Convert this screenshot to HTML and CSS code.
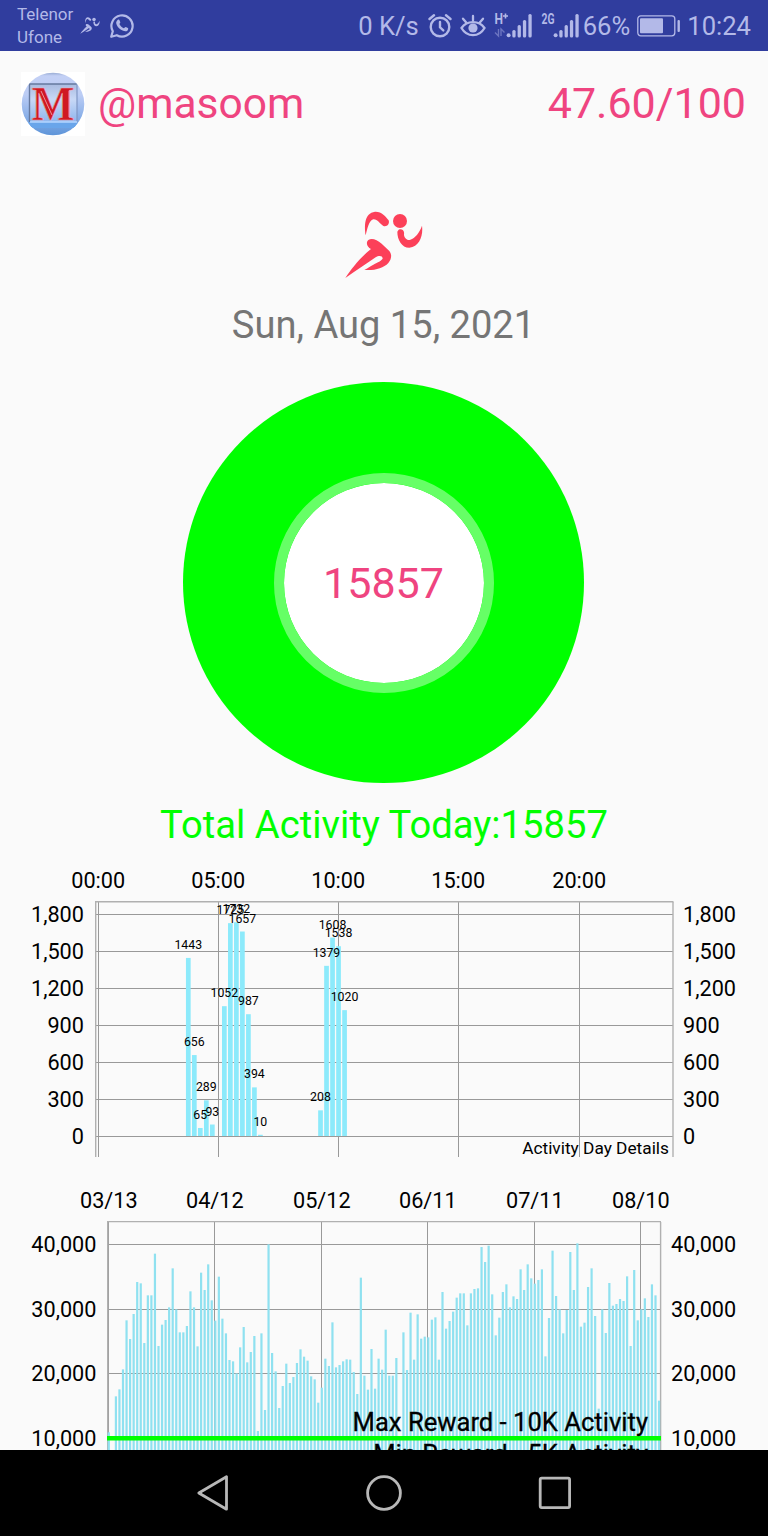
FILE: index.html
```html
<!DOCTYPE html>
<html lang="en">
<head>
    <meta charset="UTF-8">
    <meta name="viewport" content="width=device-width, initial-scale=1.0">
    <title>Activity Tracker</title>
    <link rel="stylesheet" href="styles.css">
</head>
<body>
    <div class="status-bar">
        <div class="carriers">
            <span>Telenor</span>
            <span>Ufone</span>
        </div>
        <svg class="mini-runner" width="20" height="17" viewBox="74 64 236 203"><use href="#runner"/></svg>
        <svg class="whatsapp" width="26" height="26" viewBox="0 0 26 26">
            <path d="M2.2 23.8 L3.8 18.2 A10.6 10.6 0 1 1 7.8 22.2 Z" fill="none" stroke="currentColor" stroke-width="2.2" stroke-linejoin="round"/>
            <path d="M8.6 7 C9.3 6.3 10.2 6.5 10.5 7.2 L11.3 9.2 C11.5 9.8 10.4 10.7 10.4 11.1 C11.2 13 12.8 14.4 14.8 15.2 C15.4 15.3 16.2 13.8 16.8 14 L18.9 15.1 C19.5 15.5 19.2 16.7 18.6 17.4 C17 18.9 14.5 18.3 12 16.8 C9.8 15.3 7.5 12.6 7.2 10.2 C7.1 9 7.7 7.8 8.6 7 Z" fill="currentColor"/>
        </svg>

        <div class="status-right">
            <span class="speed">0 K/s</span>
            <svg class="alarm" width="24" height="26" viewBox="0 0 24 26" fill="none" stroke="currentColor" stroke-width="2.4" stroke-linecap="round">
                <circle cx="12" cy="14" r="9.3"/>
                <path d="M12 9 V14.3 L15.3 17.4"/>
                <path d="M1.5 6 L6 2.3 M22.5 6 L18 2.3"/>
            </svg>
            <svg class="eye" width="26" height="24" viewBox="0 0 26 24" fill="none" stroke="currentColor" stroke-width="2.3" stroke-linecap="round">
                <path d="M1.5 14 C7 6.2 19 6.2 24.5 14 C19 23.6 7 23.6 1.5 14 Z"/>
                <circle cx="13" cy="14" r="4.6" fill="currentColor" stroke="none"/>
                <path d="M13 6.5 V2 M6.2 8.5 L3 4.7 M19.8 8.5 L23 4.7"/>
            </svg>
            <svg class="signal" width="39" height="26" viewBox="0 0 39 26" fill="currentColor">
                <text class="net" x="0.5" y="10.5" textLength="8.5" lengthAdjust="spacingAndGlyphs">H</text>
                <path d="M11.5 0.5 V5.5 M9 3 H14" stroke="currentColor" stroke-width="1.6"/>
                <path d="M4.5 16 V23 L1 19.5 M7 23 V16 L10.5 19.5" fill="none" stroke="currentColor" stroke-width="1.4" opacity=".45"/>
                <circle cx="14.6" cy="22.3" r="2"/>
                <rect x="18.3" y="17" width="3.3" height="7.5" rx="1.5"/>
                <rect x="23.6" y="12" width="3.3" height="12.5" rx="1.5"/>
                <rect x="28.9" y="7" width="3.3" height="17.5" rx="1.5"/>
                <rect x="34.4" y="1" width="3.3" height="23.5" rx="1.5"/>
            </svg>
            <svg class="signal second" width="39" height="26" viewBox="0 0 39 26" fill="currentColor">
                <text class="net" x="0.5" y="10.5" textLength="13" lengthAdjust="spacingAndGlyphs">2G</text>
                <circle cx="14.6" cy="22.3" r="2"/>
                <rect x="18.3" y="17" width="3.3" height="7.5" rx="1.5"/>
                <rect x="23.6" y="12" width="3.3" height="12.5" rx="1.5"/>
                <rect x="28.9" y="7" width="3.3" height="17.5" rx="1.5"/>
                <rect x="34.4" y="1" width="3.3" height="23.5" rx="1.5"/>
            </svg>
            <span class="percent">66%</span>
            <svg class="battery" width="44" height="22" viewBox="0 0 44 22">
                <rect x=".8" y=".8" width="37" height="20" rx="3" fill="none" stroke="currentColor" stroke-width="1.3"/>
                <rect x="3" y="3.2" width="23" height="15" rx="1" fill="currentColor"/>
                <rect x="40.5" y="5" width="2.4" height="12" rx="1" fill="currentColor"/>
            </svg>
            <span class="clock">10:24</span>
        </div>
    </div>

    <div class="content">
        <div class="header">
            <svg class="avatar" width="64" height="64" viewBox="0 0 64 64">
                <defs>
                    <linearGradient id="sky" x1="0" y1="0" x2="0" y2="1">
                        <stop offset="0" stop-color="#8fa3cb"/>
                        <stop offset=".06" stop-color="#c3d0f5"/>
                        <stop offset=".35" stop-color="#bccdf5"/>
                        <stop offset=".75" stop-color="#82abe6"/>
                        <stop offset="1" stop-color="#5c93d8"/>
                    </linearGradient>
                    <linearGradient id="tile" x1="0" y1="0" x2="0" y2="1">
                        <stop offset="0" stop-color="#a9bbe0"/>
                        <stop offset=".4" stop-color="#c8d8f6"/>
                        <stop offset="1" stop-color="#8fb6ee"/>
                    </linearGradient>
                    <clipPath id="round"><circle cx="32" cy="32" r="31.3"/></clipPath>
                </defs>
                <rect width="64" height="64" fill="#fff"/>
                <g clip-path="url(#round)">
                    <rect width="64" height="64" fill="url(#sky)"/>
                    <path d="M8 50 H56 L60 56 H4 Z" fill="#69a5ea"/>
                    <rect x="8.5" y="12" width="47.5" height="38" fill="url(#tile)"/>
                    <path d="M8.5 50 V12 H56" fill="none" stroke="#65799f" stroke-width="1.4"/>
                    <path d="M56 12 V50" fill="none" stroke="#8096c4" stroke-width="1.2"/>
                    <path d="M9 50 H56" fill="none" stroke="#b5d6ff" stroke-width="1.4"/>
                </g>
                <text class="avatar-letter" x="32" y="47.5" text-anchor="middle" textLength="43" lengthAdjust="spacingAndGlyphs">M</text>
                <path d="M20 19 L31 43" stroke="#f0b0ba" stroke-width=".8"/>
                <path d="M48 19 V45" stroke="#f0b0ba" stroke-width=".7"/>
            </svg>
            <span class="username">@masoom</span>
            <span class="score">47.60/100</span>
        </div>

        <svg class="runner" width="78" height="68" viewBox="75 64 234 204">
            <g id="runner">
                <path d="M137 137 C133 110 132 70 165 66 C185 65 197 80 206 92 C210 104 200 113 190 109 C180 103 172 88 160 89 C146 93 142 118 137 137 Z"/>
                <circle cx="240" cy="94" r="21"/>
                <path d="M236 120 C245 116 254 122 252 133 C251 144 262 154 271 150 C285 145 298 130 306 108 C310 137 299 171 268 174 C245 174 232 150 232 126 Z"/>
                <path d="M145 151 C156 144 170 150 185 162 L208 184 C217 195 214 210 205 220 C190 236 165 243 133 241 C145 234 153 229 160 225 C175 217 183 214 188 207 C188 197 175 198 167 203 C140 222 110 242 76 265 C95 235 125 200 153 178 C142 173 136 160 145 151 Z"/>
            </g>
        </svg>
        <div class="date">Sun, Aug 15, 2021</div>

        <div class="ring">
            <div class="ring-inner">15857</div>
        </div>

        <div class="total">Total Activity Today:15857</div>

        <svg id="dayChart" class="chart" width="768" height="306" viewBox="0 860 768 306"></svg>
        <svg id="historyChart" class="chart" width="768" height="284" viewBox="0 1166 768 284"></svg>
    </div>

    <div class="nav-bar">
        <svg width="34" height="38" viewBox="0 0 34 38"><path d="M30.5 2.8 V35.2 L2.8 19 Z"/></svg>
        <svg width="38" height="38" viewBox="0 0 38 38"><circle cx="19" cy="19" r="16.4"/></svg>
        <svg width="34" height="34" viewBox="0 0 34 34"><rect x="2.2" y="2.2" width="29.4" height="29.4" rx="1.5"/></svg>
    </div>

    <script src="charts.js"></script>
</body>
</html>
```

FILE: styles.css
```css
body {
    margin: 0;
    padding: 0;
    width: 768px;
    height: 1536px;
    overflow: hidden;
    display: flex;
    flex-direction: column;
    background-color: #fafafa;
    font-family: Roboto, 'Noto Sans', sans-serif;
}

svg {
    display: block;
    flex-shrink: 0;
}

/* status bar */
.status-bar {
    height: 51px;
    flex-shrink: 0;
    display: flex;
    align-items: center;
    background-color: #303d9e;
    color: #b3b9e8;
    padding: 0 17px;
    box-sizing: border-box;
    white-space: nowrap;
}

.carriers {
    display: flex;
    flex-direction: column;
    width: 63px;
    font-size: 17px;
    line-height: 23px;
    padding-top: 1px;
}

.mini-runner {
    fill: currentColor;
}

.whatsapp {
    margin-left: 9px;
}

.status-right {
    display: flex;
    align-items: center;
    margin-left: auto;
    font-size: 25.6px;
    padding-top: 1px;
}

.alarm {
    margin-left: 9px;
}

.eye {
    margin-left: 8px;
}

.signal {
    margin-left: 8px;
    overflow: visible;
}

.net {
    font-size: 14px;
    font-weight: 700;
}

.percent {
    margin-left: 3px;
}

.battery {
    margin: 0 6px 0 7px;
}

/* page */
.content {
    height: 1399px;
    display: flex;
    flex-direction: column;
    align-items: center;
    overflow: hidden;
}

.header {
    display: flex;
    align-items: center;
    align-self: stretch;
    height: 64px;
    padding: 21px 22px 0 21px;
    color: #ef4480;
    font-size: 43px;
}

.username {
    margin-left: 13px;
    margin-top: -2px;
    font-size: 42.5px;
}

.score {
    margin-left: auto;
    margin-top: -2px;
}

.avatar-letter {
    font-family: 'Liberation Serif', serif;
    font-size: 48px;
    font-weight: 700;
    fill: #d01822;
    stroke: #e8a5b0;
    stroke-width: .6px;
}

.runner {
    margin-top: 75px;
    fill: #fc4059;
}

.date {
    height: 50px;
    margin-top: 21px;
    margin-right: 1px;
    line-height: 50px;
    font-size: 38.1px;
    color: #757575;
}

.ring {
    width: 401px;
    height: 401px;
    margin-top: 32px;
    margin-right: 1px;
    border-radius: 50%;
    background-color: #00ff00;
    display: flex;
    align-items: center;
    justify-content: center;
}

.ring-inner {
    width: 200px;
    height: 200px;
    border: 10px solid #66ff66;
    border-radius: 50%;
    background-color: #fff;
    background-clip: padding-box;
    color: #ef4480;
    font-size: 43px;
    line-height: 200px;
    text-align: center;
}

.total {
    height: 50px;
    margin-top: 17px;
    line-height: 50px;
    font-size: 38.2px;
    color: #00ff00;
}

/* charts */
#dayChart {
    margin-top: 10px;
}

.grid {
    stroke: #999;
    stroke-width: 1;
}

.border {
    stroke: #b0b0b0;
    stroke-width: 1.4;
}

.axis-label {
    font-size: 21.7px;
    fill: #000;
}

.bar {
    fill: #8ceafb;
}

.thin-bar {
    fill: #8fe1f0;
}

.value-label {
    font-size: 12.3px;
    fill: #000;
}

.chart-title {
    font-size: 17.3px;
    fill: #000;
}

.limit-line {
    stroke: #00ff00;
    stroke-width: 4.4;
}

.limit-label {
    font-size: 25.6px;
    fill: #000;
    stroke: #000;
    stroke-width: .3px;
}

/* navigation bar */
.nav-bar {
    height: 86px;
    flex-shrink: 0;
    display: flex;
    align-items: center;
    justify-content: center;
    gap: 135px;
    background-color: #000;
}

.nav-bar svg {
    fill: none;
    stroke: #b8b8b8;
    stroke-width: 2.8;
    stroke-linejoin: round;
}
```

FILE: charts.js
```js
const NS = 'http://www.w3.org/2000/svg';

function add(parent, tag, attrs, text) {
    const el = document.createElementNS(NS, tag);
    for (const key in attrs) {
        el.setAttribute(key, attrs[key]);
    }
    if (text !== undefined) {
        el.textContent = text;
    }
    parent.appendChild(el);
    return el;
}

function line(parent, cls, x1, y1, x2, y2) {
    add(parent, 'line', { class: cls, x1, y1, x2, y2 });
}

function label(parent, cls, x, y, anchor, text) {
    return add(parent, 'text', { class: cls, x, y, 'text-anchor': anchor }, text);
}

// steps per quarter of an hour: [slot, steps]
const daySteps = [
    [15, 1443], [16, 656], [17, 65], [18, 289], [19, 93],
    [21, 1052], [22, 1725], [23, 1732], [24, 1657], [25, 987], [26, 394], [27, 10],
    [37, 208], [38, 1379], [39, 1608], [40, 1538], [41, 1020]
];

function drawDayChart() {
    const svg = document.getElementById('dayChart');
    const zero = 1136.5;
    const perStep = 0.1234;

    for (let v = 0; v <= 1800; v += 300) {
        const y = Math.floor(zero - v * perStep) + 0.5;
        line(svg, 'grid', 95, y, 673, y);
        label(svg, 'axis-label', 84, y + 7, 'end', v.toLocaleString('en-US'));
        label(svg, 'axis-label', 683, y + 7, 'start', v.toLocaleString('en-US'));
    }
    for (let h = 0; h <= 20; h += 5) {
        const x = Math.floor(98.4 + h * 24.03) + 0.5;
        line(svg, 'grid', x, 902, x, 1157);
        label(svg, 'axis-label', x - 0.3, 888.4, 'middle', String(h).padStart(2, '0') + ':00');
    }
    line(svg, 'border', 95, 901.8, 673.5, 901.8);
    line(svg, 'border', 95.7, 902, 95.7, 1157);
    line(svg, 'border', 673, 902, 673, 1157);

    daySteps.forEach(([slot, steps]) => {
        const h = steps * perStep;
        add(svg, 'rect', { class: 'bar', x: 95.8 + slot * 6.01, y: 1136 - h, width: 4.7, height: h });
    });
    daySteps.forEach(([slot, steps]) => {
        label(svg, 'value-label', 98.1 + slot * 6.01, 1127 - steps * perStep, 'middle', steps);
    });
    label(svg, 'chart-title', 669, 1154, 'end', 'Activity Day Details');
}

// bar tops per day from 03/13 on, in thirds of a pixel below the chart head
const tops = [
    757, 0, 649, 628, 568, 421, 477, 402, 306, 310, 489, 346, 346, 221, 498, 434, 420, 382, 265, 388,
    457, 457, 438, 334, 382, 499, 278, 330, 253, 361, 422, 290, 416, 460, 540, 544, 580, 502, 441, 547,
    516, 468, 753, 460, 690, 193, 519, 574, 684, 618, 551, 609, 591, 549, 508, 530, 542, 589, 598, 668,
    623, 536, 558, 427, 562, 555, 544, 538, 539, 576, 642, 293, 587, 629, 507, 626, 536, 569, 449, 587,
    587, 534, 775, 457, 570, 398, 539, 403, 476, 470, 472, 419, 412, 539, 336, 446, 423, 395, 353, 340,
    340, 436, 340, 327, 325, 201, 246, 197, 343, 466, 413, 336, 313, 382, 349, 357, 268, 330, 253, 295,
    311, 300, 268, 529, 414, 212, 348, 388, 460, 390, 216, 330, 190, 440, 428, 321, 265, 408, 686, 388,
    459, 309, 377, 372, 357, 363, 289, 498, 270, 421, 388, 355, 411, 313, 346, 662
];

function drawHistoryChart() {
    const svg = document.getElementById('historyChart');
    const dates = ['03/13', '04/12', '05/12', '06/11', '07/11', '08/10'];

    for (let i = 0; i < 4; i++) {
        const y = Math.floor(1244.4 + i * 64.6) + 0.5;
        const text = (40000 - i * 10000).toLocaleString('en-US');
        line(svg, 'grid', 107, y, 661, y);
        label(svg, 'axis-label', 96.5, y + 7, 'end', text);
        label(svg, 'axis-label', 671, y + 7, 'start', text);
    }
    dates.forEach((date, i) => {
        const x = Math.floor(108.5 + i * 106.45) + 0.5;
        line(svg, 'grid', x, 1222, x, 1450);
        label(svg, 'axis-label', x + 0.3, 1208.4, 'middle', date);
    });
    line(svg, 'border', 107, 1221.6, 661, 1221.6);
    line(svg, 'border', 107.7, 1222, 107.7, 1450);
    line(svg, 'border', 660.6, 1222, 660.6, 1450);

    tops.forEach((top, i) => {
        if (top === 0) return;
        const y = 1180 + top / 3;
        add(svg, 'rect', { class: 'thin-bar', x: 107.7 + i * 3.55, y, width: 2.2, height: 1450 - y });
    });

    line(svg, 'limit-line', 107, 1438.3, 661, 1438.3);
    label(svg, 'limit-label', 648, 1431, 'end', 'Max Reward - 10K Activity');
    label(svg, 'limit-label', 648, 1462.5, 'end', 'Min Reward - 5K Activity');
}

drawDayChart();
drawHistoryChart();
```
